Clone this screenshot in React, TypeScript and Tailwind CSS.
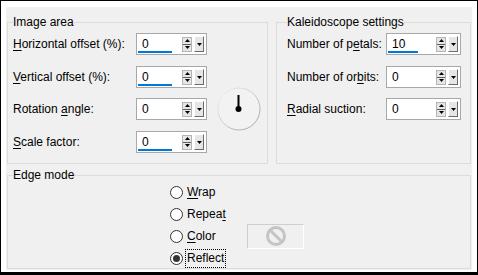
function Up() {
  return (
    <svg width="5" height="3" viewBox="0 0 5 3">
      <polygon points="0,3 5,3 2.5,0" fill="#000" />
    </svg>
  )
}

function Down() {
  return (
    <svg width="5" height="3" viewBox="0 0 5 3">
      <polygon points="0,0 5,0 2.5,3" fill="#000" />
    </svg>
  )
}

interface SpinProps {
  value: string
  w: string
  bar?: string
}

function Spin({ value, w, bar }: SpinProps) {
  return (
    <div className={`relative flex h-[22px] shrink-0 items-center justify-between border border-[#a8a8a8] bg-white ${w}`}>
      <span className="pl-[5px]">{value}</span>
      <div className="mr-[2px] flex items-center gap-[2px]">
        <div className="flex h-[15px] w-[10px] flex-col border border-[#b4b4b4] bg-[#e6e6e6]">
          <div className="flex flex-1 items-center justify-center border-b border-[#606060]">
            <Up />
          </div>
          <div className="flex flex-1 items-center justify-center">
            <Down />
          </div>
        </div>
        <div className="flex h-[16px] w-[10px] items-center justify-center border border-t-white border-l-white border-r-[#6a6a6a] border-b-[#6a6a6a] bg-[#e6e6e6]">
          <Down />
        </div>
      </div>
      {bar && <div className={`absolute bottom-[1px] left-[1px] h-[2px] bg-[#0078d7] ${bar}`} />}
    </div>
  )
}

function Dial() {
  return (
    <svg width="44" height="44" viewBox="0 0 44 44" className="shrink-0">
      <defs>
        <linearGradient id="ring" x1="0" y1="0" x2="1" y2="1">
          <stop offset="0" stopColor="#f4f4f4" />
          <stop offset="1" stopColor="#a0a0a0" />
        </linearGradient>
      </defs>
      <circle cx="22" cy="22" r="21" fill="#f2f2f2" stroke="url(#ring)" strokeWidth="1" />
      <line x1="21.5" y1="22" x2="21.5" y2="8" stroke="#000" strokeWidth="2" />
      <circle cx="21.5" cy="22" r="3" fill="#000" />
    </svg>
  )
}

function Radio({ checked }: { checked?: boolean }) {
  return (
    <span className="flex h-[13px] w-[13px] shrink-0 items-center justify-center rounded-full border border-[#333] bg-white">
      {checked && <span className="h-[7px] w-[7px] rounded-full bg-[#333]" />}
    </span>
  )
}

function NoSign() {
  return (
    <svg width="22" height="22" viewBox="0 0 22 22">
      <circle cx="11" cy="11" r="8.5" fill="none" stroke="#c4c4c4" strokeWidth="3" />
      <line x1="5" y1="5" x2="17" y2="17" stroke="#c4c4c4" strokeWidth="3" />
    </svg>
  )
}

export default function App() {
  return (
    <div className="h-[275px] w-[478px] border-x border-t border-b-[3px] border-black bg-white pt-[6px] pr-[5px] pb-[2px] pl-[5px] font-['Liberation_Sans',Arial,sans-serif] text-[12px] leading-[15px] text-black">
      <div className="h-full w-full bg-[#f0f0f0] pt-[8px] pl-[1px]">
        <div className="flex">
          {/* Image area */}
          <fieldset className="h-[149px] w-[261px] border border-[#dcdcdc] pl-[5px]">
            <legend className="px-0">Image area</legend>
            <div className="flex flex-col pt-[3px]">
              <div className="flex h-[22px] items-center">
                <span className="w-[123px]">
                  <span className="underline underline-offset-2">H</span>orizontal offset (%):
                </span>
                <Spin value="0" w="w-[71px]" bar="w-[34px]" />
              </div>
              <div className="mt-[11px] flex h-[22px] items-center">
                <span className="w-[123px]">
                  <span className="underline underline-offset-2">V</span>ertical offset (%):
                </span>
                <Spin value="0" w="w-[71px]" bar="w-[34px]" />
              </div>
              <div className="mt-[10px] flex h-[22px] items-center">
                <span className="w-[123px]">
                  Rotation <span className="underline underline-offset-2">a</span>ngle:
                </span>
                <Spin value="0" w="w-[71px]" />
                <div className="ml-[10px] flex h-[22px] items-center">
                  <Dial />
                </div>
              </div>
              <div className="mt-[11px] flex h-[22px] items-center">
                <span className="w-[123px]">
                  <span className="underline underline-offset-2">S</span>cale factor:
                </span>
                <Spin value="0" w="w-[71px]" bar="w-[34px]" />
              </div>
            </div>
          </fieldset>

          {/* Kaleidoscope settings */}
          <fieldset className="ml-[8px] h-[149px] w-[195px] border border-[#dcdcdc] pl-[10px]">
            <legend className="px-0">Kaleidoscope settings</legend>
            <div className="flex flex-col pt-[3px]">
              <div className="flex h-[22px] items-center">
                <span className="w-[99px]">
                  Number of p<span className="underline underline-offset-2">e</span>tals:
                </span>
                <Spin value="10" w="w-[75px]" bar="w-[30px]" />
              </div>
              <div className="mt-[11px] flex h-[22px] items-center">
                <span className="w-[99px]">
                  Number of or<span className="underline underline-offset-2">b</span>its:
                </span>
                <Spin value="0" w="w-[75px]" />
              </div>
              <div className="mt-[10px] flex h-[22px] items-center">
                <span className="w-[99px]">
                  <span className="underline underline-offset-2">R</span>adial suction:
                </span>
                <Spin value="0" w="w-[75px]" />
              </div>
            </div>
          </fieldset>
        </div>

        {/* Edge mode */}
        <fieldset className="mt-[4px] h-[101px] w-[464px] border border-[#dcdcdc] pl-[5px]">
          <legend className="px-0">Edge mode</legend>
          <div className="ml-[157px] flex flex-col gap-[6px] pt-[1px]">
            <div className="flex h-[16px] items-center gap-[4px]">
              <Radio />
              <span>
                <span className="underline underline-offset-2">W</span>rap
              </span>
            </div>
            <div className="flex h-[16px] items-center gap-[4px]">
              <Radio />
              <span>
                Repea<span className="underline underline-offset-2">t</span>
              </span>
            </div>
            <div className="flex h-[16px] items-center gap-[4px]">
              <Radio />
              <span className="w-[56px]">
                <span className="underline underline-offset-2">C</span>olor
              </span>
              <div className="flex h-[25px] w-[57px] shrink-0 items-center justify-center border border-t-[#cfcfcf] border-l-[#cfcfcf] border-r-white border-b-white">
                <NoSign />
              </div>
            </div>
            <div className="flex h-[16px] items-center gap-[4px]">
              <Radio checked />
              <span className="outline-1 outline-offset-[1px] outline-black outline-dotted">Reflect</span>
            </div>
          </div>
        </fieldset>
      </div>
    </div>
  )
}
